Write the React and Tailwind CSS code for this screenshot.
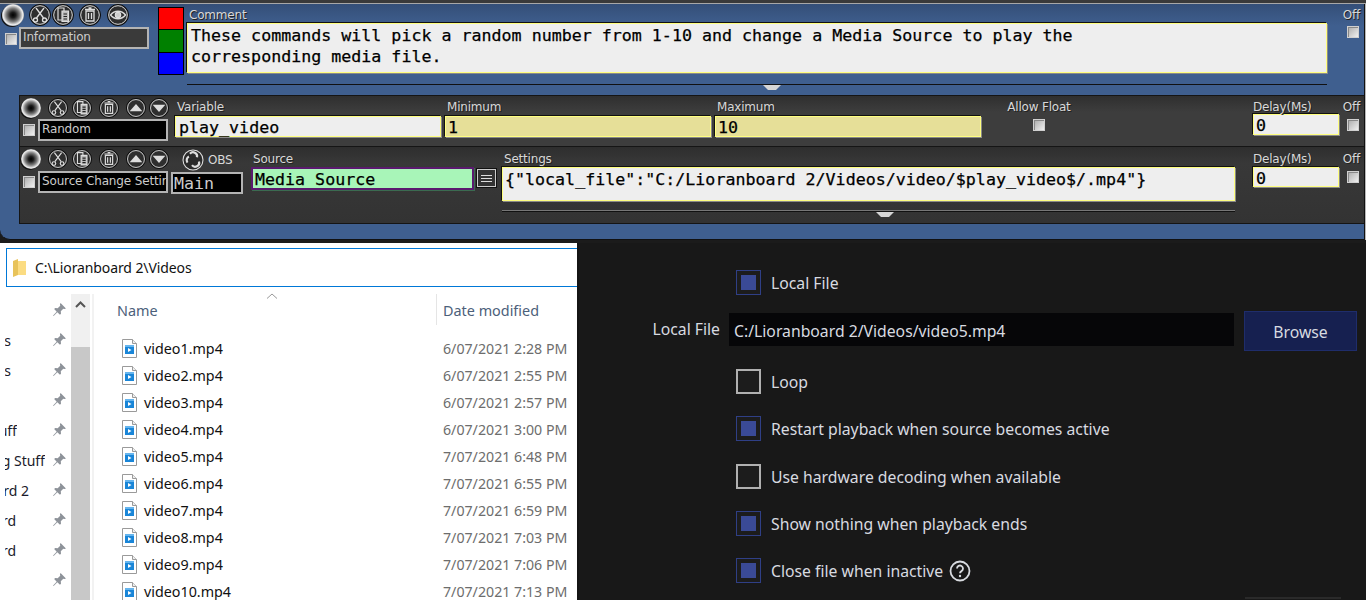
import React from "react";

const Knob = ({ s = 22 }) => (
  <div className={(s === 22 ? "w-[22px] h-[22px]" : "w-[20px] h-[20px]") + " rounded-full shrink-0 bg-[radial-gradient(circle_closest-side,#000_0%,#1c1c1c_25%,#808080_62%,#f0f0f0_90%,#aaa_100%)] shadow-[-1px_1px_0_#111]"} />
);

const Glyphs = {
  cut: (
    <g stroke="#ddd" strokeWidth="1.3" fill="none">
      <path d="M7 4l7.500 10M15 4L7.500 14" />
      <circle cx="6.500" cy="16" r="2" />
      <circle cx="15.500" cy="16" r="2" />
    </g>
  ),
  copy: (
    <g stroke="#ddd" strokeWidth="1.2" fill="#333">
      <path d="M6 4h6v12H6z" />
      <path d="M10 7h6.500v10.500H10z" fill="#bbb" />
      <path d="M11.500 10h3.500M11.500 12.500h3.500M11.500 15h3.500" stroke="#222" />
    </g>
  ),
  trash: (
    <g stroke="#ddd" strokeWidth="1.3" fill="none">
      <path d="M7 7h8v10H7z" />
      <path d="M6 5.500h10M9.500 4h3M9.500 9v6M12.500 9v6" />
    </g>
  ),
  eye: (
    <g stroke="#ddd" strokeWidth="1.4" fill="none">
      <path d="M3.500 11c4-5 11-5 15 0-4 5-11 5-15 0z" />
      <circle cx="11" cy="11" r="2.600" fill="#ccc" />
    </g>
  ),
  up: <path d="M4 14.500L11 6.500l7 8z" fill="#ddd" />,
  down: <path d="M4 7.500h14l-7 8z" fill="#ddd" />,
};

const Btn = ({ g, s = 22, ml = 0 }) => (
  <svg width={s} height={s} viewBox="0 0 22 22" className="shrink-0" style={{ marginLeft: ml }}>
    <circle cx="11" cy="11" r="10.500" fill="#2e2e2e" stroke="#0b0b0b" />
    <circle cx="11" cy="11" r="9.300" fill="none" stroke="#d8d8d8" strokeWidth="1" />
    {Glyphs[g]}
  </svg>
);

const Check = () => (
  <div className="w-[12px] h-[12px] shrink-0 border border-[#d0d0d0] bg-[linear-gradient(135deg,#aaa,#f0f0f0)] shadow-[inset_1px_1px_0_#888]" />
);

const Lbl = ({ children, cls = "" }) => (
  <div className={"font-['DejaVu_Sans',sans-serif] text-[12px] leading-[14px] tracking-[-0.2px] text-[#d8d8d8] whitespace-nowrap [text-shadow:1px_1px_0_#222] " + cls}>{children}</div>
);

const mono = "font-['DejaVu_Sans_Mono',monospace] text-[16.65px] leading-[21px] text-black whitespace-pre [-webkit-text-stroke:0.25px_black]";

const Name = ({ children, cls = "" }) => (
  <div className={"h-[22px] border-2 border-[#b4b4b4] pl-[2px] overflow-hidden whitespace-nowrap font-['DejaVu_Sans',sans-serif] text-[12px] leading-[17px] tracking-[-0.15px] text-[#ccc] " + cls}>{children}</div>
);

const Field = ({ children, cls = "" }) => (
  <div className={"border border-[#ffff80] pl-[2px] shadow-[-1px_-1px_0_#111,1px_1px_0_#8a8a8a] " + mono + " " + cls}>{children}</div>
);

const Tick = () => (
  <svg width="18" height="6" viewBox="0 0 18 6" className="block">
    <path d="M0 0h18l-5 5H5z" fill="#d6d6d6" />
  </svg>
);

const OffCol = ({ cbTop = 3, cls = "ml-[4px]" }) => (
  <div className={"w-[20px] flex flex-col items-center " + cls}>
    <Lbl cls="-ml-[3px]">Off</Lbl>
    <div style={{ marginTop: cbTop }}><Check /></div>
  </div>
);

const Obs = () => (
  <svg width="22" height="22" viewBox="0 0 22 22">
    <circle cx="11" cy="11" r="10" fill="#2a2a2a" stroke="#ddd" strokeWidth="1.100" />
    <g fill="none" stroke="#ddd" strokeWidth="2.200">
      <path d="M8 4.800a4 4 0 0 1 7 3.400" />
      <path d="M17 12.500a4 4 0 0 1-7 3.600" />
      <path d="M5.500 13.600a4 4 0 0 1 1.400-6" />
    </g>
  </svg>
);

function TopPanel() {
  return (
    <div className="h-[236px] w-[1365px] flex flex-col bg-[#3f5f8f] border-r border-b border-[#111] rounded-bl-[10px] overflow-hidden">
      {/* comment section */}
      <div className="h-[91px] flex shrink-0 bg-[linear-gradient(#344f78,#3f5f8f_22px)]">
        <div className="w-[158px] shrink-0 pl-[2px]">
          <div className="flex h-[23px] items-start">
            <Knob />
            <Btn g="cut" ml={5} />
            <Btn g="copy" ml={1} />
            <Btn g="trash" ml={5} />
            <Btn g="eye" ml={6} />
          </div>
          <div className="flex items-center">
            <div className="ml-[3px] mt-[2px]"><Check /></div>
            <Name cls="ml-[2px] w-[130px] bg-[#3a3a3a] text-[#b5b5b5]">Information</Name>
          </div>
        </div>
        <div className="w-[26px] h-[68px] mt-[3px] shrink-0 border border-black flex flex-col gap-[1px] bg-black">
          <div className="flex-1 bg-[#ff0000]" />
          <div className="flex-1 bg-[#008000]" />
          <div className="flex-1 bg-[#0000ff]" />
        </div>
        <div className="w-[1140px] ml-[3px] shrink-0 pt-[4px]">
          <Lbl cls="ml-[2px]">Comment</Lbl>
          <Field cls="h-[50px] mt-[1px] pt-[1px] pl-[3px] bg-[#eeeeee]">{"These commands will pick a random number from 1-10 and change a Media Source to play the\ncorresponding media file."}</Field>
          <div className="h-[1px] bg-[#111] mt-[11px]" />
          <div className="flex justify-center pl-[30px]"><Tick /></div>
        </div>
        <div className="pt-[4px]"><OffCol cbTop={4} cls="ml-[16px]" /></div>
      </div>

      {/* rows */}
      <div className="ml-[19px] flex-1 flex flex-col">
        <div className="h-[52px] shrink-0 flex border border-r-0 border-[#151515] bg-[linear-gradient(#2f2f2f,#3d3d3d_16px)]">
          <div className="w-[155px] shrink-0 pt-[2px] pl-[1px]">
            <div className="flex h-[20px]">
              <Knob s={20} />
              <Btn g="cut" s={20} ml={7} />
              <Btn g="copy" s={20} ml={4} />
              <Btn g="trash" s={20} ml={7} />
              <Btn g="up" s={20} ml={7} />
              <Btn g="down" s={20} ml={3} />
            </div>
            <div className="flex items-center mt-[1px]">
              <div className="ml-[2px]"><Check /></div>
              <Name cls="ml-[3px] w-[130px] bg-black">Random</Name>
            </div>
          </div>
          <div className="w-[266px] shrink-0 pt-[4px]">
            <Lbl cls="ml-[2px]">Variable</Lbl>
            <Field cls="h-[21px] mt-[2px] pl-[3px] bg-[#eeeeee] leading-[19px]">play_video</Field>
          </div>
          <div className="w-[266px] ml-[4px] shrink-0 pt-[4px]">
            <Lbl cls="ml-[2px]">Minimum</Lbl>
            <Field cls="h-[21px] mt-[2px] bg-[#e6df98] leading-[19px]">1</Field>
          </div>
          <div className="w-[266px] ml-[4px] shrink-0 pt-[4px]">
            <Lbl cls="ml-[2px]">Maximum</Lbl>
            <Field cls="h-[21px] mt-[2px] bg-[#e6df98] leading-[19px]">10</Field>
          </div>
          <div className="w-[66px] ml-[25px] shrink-0 pt-[4px] flex flex-col items-center">
            <Lbl>Allow Float</Lbl>
            <div className="mt-[5px]"><Check /></div>
          </div>
          <div className="w-[86px] ml-[181px] shrink-0 pt-[4px]">
            <Lbl>Delay(Ms)</Lbl>
            <Field cls="h-[21px] bg-[#eeeeee] leading-[19px]">0</Field>
          </div>
          <div className="pt-[4px]"><OffCol cbTop={5} /></div>
        </div>

        <div className="h-[77px] shrink-0 flex border border-t-0 border-r-0 border-[#151515] bg-[linear-gradient(#2e2e2e,#383838_16px,#333)]">
          <div className="w-[151px] shrink-0 pt-[2px] pl-[1px]">
            <div className="flex h-[20px]">
              <Knob s={20} />
              <Btn g="cut" s={20} ml={7} />
              <Btn g="copy" s={20} ml={4} />
              <Btn g="trash" s={20} ml={7} />
              <Btn g="up" s={20} ml={7} />
              <Btn g="down" s={20} ml={3} />
            </div>
            <div className="flex items-center mt-[2px]">
              <div className="ml-[2px]"><Check /></div>
              <Name cls="ml-[3px] w-[130px] bg-black">Source Change Settings</Name>
            </div>
          </div>
          <div className="w-[72px] shrink-0">
            <div className="flex items-center h-[24px] ml-[11px] mt-[1px]">
              <Obs />
              <span className="ml-[4px] font-['DejaVu_Sans',sans-serif] text-[12px] tracking-[-0.2px] text-[#d8d8d8]">OBS</span>
            </div>
            <div className="w-[72px] h-[22px] border-2 border-[#b4b4b4] bg-black pl-[1px] text-[#ccc] font-['DejaVu_Sans_Mono',monospace] text-[16.65px] leading-[20px]">Main</div>
          </div>
          <div className="w-[223px] ml-[8px] shrink-0 pt-[5px]">
            <Lbl cls="ml-[2px]">Source</Lbl>
            <div className={"h-[23px] mt-[1px] border-2 border-[#5a1a6e] bg-[#a8f5b8] pl-[2px] shadow-[1px_1px_0_#3b6b50] " + mono + " leading-[19px]"}>Media Source</div>
          </div>
          <div className="w-[19px] h-[18px] ml-[3px] mt-[22px] shrink-0 border border-[#ccc] bg-[#333] flex flex-col justify-center gap-[2px] px-[3px] shadow-[0_0_0_1px_#111]">
            <div className="h-[1px] bg-[#ddd]" />
            <div className="h-[1px] bg-[#ddd]" />
            <div className="h-[1px] bg-[#ddd]" />
          </div>
          <div className="w-[733px] ml-[6px] shrink-0 pt-[5px]">
            <Lbl cls="ml-[2px]">Settings</Lbl>
            <Field cls="h-[34px] mt-[1px] pt-[1px] bg-[#eeeeee]">{'{"local_file":"C:/Lioranboard 2/Videos/video/$play_video$/.mp4"}'}</Field>
            <div className="h-[1px] bg-[#111] mt-[10px] shadow-[0_-1px_0_#777]" />
            <div className="flex justify-center pl-[33px]"><Tick /></div>
          </div>
          <div className="w-[86px] ml-[18px] shrink-0 pt-[5px]">
            <Lbl>Delay(Ms)</Lbl>
            <Field cls="h-[20px] mt-[1px] bg-[#eeeeee] leading-[18px]">0</Field>
          </div>
          <div className="pt-[5px]"><OffCol cbTop={5} /></div>
        </div>
      </div>
    </div>
  );
}

const Pin = () => (
  <svg width="15" height="15" viewBox="0 0 14 14" className="block">
    <path d="M8 1l5 5-1.200.6-1.300-.3-2.300 2.400.2 2.300-1 1L5 9.600 1.500 13 1 12.500l3.400-3.500L2 6.600l1-1 2.300.2 2.400-2.300-.3-1.300z" fill="#8d9299" />
  </svg>
);

const FileIcon = () => (
  <svg width="15" height="19" viewBox="0 0 15 19" className="shrink-0 block">
    <path d="M.5.500h10l4 4v14H.500z" fill="#fff" stroke="#9a9a9a" />
    <path d="M10.500.500v4h4" fill="#eee" stroke="#9a9a9a" />
    <rect x="3" y="6" width="9" height="9" fill="#1a86d8" />
    <rect x="3" y="6" width="9" height="2" fill="#66b5ee" />
    <path d="M6 9l3.500 2L6 13z" fill="#fff" />
  </svg>
);

const files = [
  ["video1.mp4", "6/07/2021 2:28 PM"],
  ["video2.mp4", "6/07/2021 2:55 PM"],
  ["video3.mp4", "6/07/2021 2:57 PM"],
  ["video4.mp4", "6/07/2021 3:00 PM"],
  ["video5.mp4", "7/07/2021 6:48 PM"],
  ["video6.mp4", "7/07/2021 6:55 PM"],
  ["video7.mp4", "7/07/2021 6:59 PM"],
  ["video8.mp4", "7/07/2021 7:03 PM"],
  ["video9.mp4", "7/07/2021 7:06 PM"],
  ["video10.mp4", "7/07/2021 7:13 PM"],
];

const nav = [
  ["", "w-[0px]"],
  ["s", "w-[6px]"],
  ["s", "w-[6px]"],
  ["", "w-[0px]"],
  ["uff", "w-[12px]"],
  ["g Stuff", "w-[40px]"],
  ["rd 2", "w-[24px]"],
  ["rd", "w-[11px]"],
  ["rd", "w-[11px]"],
  ["", "w-[0px]"],
];

function Explorer() {
  return (
    <div className="w-[577px] h-[357px] shrink-0 bg-white overflow-hidden font-['Noto_Sans',sans-serif]">
      <div className="h-[39px] ml-[6px] mt-[5px] w-[580px] border border-[#0078d7] flex items-center pl-[6px]">
        <svg width="13" height="18" viewBox="0 0 13 18" className="shrink-0">
          <path d="M0 2l5-2v16l-5 2z" fill="#e8c35a" />
          <path d="M5 2h8v14H5z" fill="#fbdc82" />
        </svg>
        <span className="ml-[9px] text-[14px] tracking-[-0.1px] text-[#111]">C:\Lioranboard 2\Videos</span>
      </div>
      <div className="flex mt-[7px]">
        <div className="w-[71px] shrink-0">
          {nav.map(([n, w], i) => (
            <div key={i} className="h-[30px] flex items-center pl-[5px] pr-[4px]">
              <div className={"flex justify-end overflow-hidden mt-[2px] " + w}>
                <span className="text-[14px] text-[#1a1a2a] whitespace-nowrap">{n}</span>
              </div>
              <div className="ml-auto"><Pin /></div>
            </div>
          ))}
        </div>
        <div className="w-[19px] shrink-0 flex flex-col">
          <div className="h-[53px] bg-[#f0f0f0] flex justify-center pt-[7px]">
            <svg width="11" height="7" viewBox="0 0 11 7"><path d="M1 6l4.500-4.500L10 6" fill="none" stroke="#555" strokeWidth="2" /></svg>
          </div>
          <div className="flex-1 bg-[#c8c8c8]" />
        </div>
        <div className="w-[2px] ml-[2px] bg-[#f2f2f2] shrink-0" />
        <div className="flex-1 pl-[23px] min-w-0">
          <div className="h-[31px] flex relative">
            <div className="w-[319px] text-[14.4px] text-[#4c607a] pt-[6px]">Name</div>
            <div className="w-[1px] h-[31px] bg-[#e5e5e5]" />
            <div className="pl-[6px] text-[14.4px] text-[#4c607a] pt-[6px]">Date modified</div>
            <svg width="10" height="6" viewBox="0 0 10 6" className="absolute left-[150px] -top-[1px]"><path d="M0 5.500L5 1l5 4.500" fill="none" stroke="#999" /></svg>
          </div>
          <div className="mt-[10px]">
            {files.map(([n, d]) => (
              <div key={n} className="h-[27px] flex items-center">
                <div className="w-[27px] pl-[5px] shrink-0"><FileIcon /></div>
                <div className="w-[299px] text-[14.3px] text-[#111]">{n}</div>
                <div className="text-[14.2px] text-[#6d6d6d] whitespace-nowrap">{d}</div>
              </div>
            ))}
          </div>
        </div>
      </div>
    </div>
  );
}

const ObsCheck = ({ on }) =>
  on ? (
    <div className="w-[25px] h-[25px] shrink-0 border border-[#2f3f86] p-[4px] bg-[#1c1c1c]"><div className="w-full h-full bg-[#3a4a96]" /></div>
  ) : (
    <div className="w-[25px] h-[25px] shrink-0 border-2 border-[#b0b0b0] bg-[#1c1c1c]" />
  );

const ObsRow = ({ on, children, extra, cls = "" }) => (
  <div className={"flex items-center h-[25px] ml-[157px] " + cls}>
    <ObsCheck on={on} />
    <span className="ml-[10px] mt-[2px] text-[15.75px] text-[#d8dbe0] whitespace-nowrap">{children}</span>
    {extra}
  </div>
);

function ObsPanel() {
  return (
    <div className="flex-1 h-[357px] bg-[#181818] font-['Noto_Sans',sans-serif] overflow-hidden border-l-2 border-[#141414]">
      <ObsRow on cls="mt-[27px]">Local File</ObsRow>
      <div className="flex items-center mt-[16px] h-[40px]">
        <div className="w-[141px] text-right text-[15.75px] text-[#d8dbe0] -mt-[3px]">Local File</div>
        <div className="w-[505px] h-[33px] ml-[9px] -mt-[3px] bg-[#060608] pl-[5px] pt-[2px] text-[15.75px] leading-[33px] text-[#d8dbe0]">C:/Lioranboard 2/Videos/video5.mp4</div>
        <div className="w-[113px] h-[40px] ml-[10px] bg-[#162050] border border-[#1f2d6b] text-[15.75px] text-[#d8dbe0] flex items-center justify-center pt-[3px]">Browse</div>
      </div>
      <ObsRow cls="mt-[18px]">Loop</ObsRow>
      <ObsRow on cls="mt-[22px]">Restart playback when source becomes active</ObsRow>
      <ObsRow cls="mt-[23px]">Use hardware decoding when available</ObsRow>
      <ObsRow on cls="mt-[22px]">Show nothing when playback ends</ObsRow>
      <ObsRow
        on
        cls="mt-[22px]"
        extra={
          <svg width="22" height="22" viewBox="0 0 22 22" className="ml-[6px]">
            <circle cx="11" cy="11" r="9.500" fill="none" stroke="#d8dbe0" strokeWidth="1.800" />
            <path d="M8 8.500a3 3 0 1 1 4.500 2.600c-1 .6-1.500 1-1.500 2.200" fill="none" stroke="#d8dbe0" strokeWidth="1.800" />
            <circle cx="11" cy="16" r="1.200" fill="#d8dbe0" />
          </svg>
        }
      >
        Close file when inactive
      </ObsRow>
      <div className="ml-[666px] w-[96px] h-[2px] mt-[14px] bg-[#2a2a2a]" />
    </div>
  );
}

export default function App() {
  return (
    <div className="w-[1366px] h-[600px] overflow-hidden bg-[#1b1b1b] flex flex-col">
      <div className="h-[3px] bg-[#3a3a3a] shrink-0" />
      <div className="h-[1px] bg-[#a8a8a8] shrink-0" />
      <div className="flex shrink-0 h-[236px]">
        <TopPanel />
        <div className="w-[1px] bg-[#b8b8b8]" />
      </div>
      <div className="h-[3px] shrink-0" />
      <div className="flex">
        <Explorer />
        <ObsPanel />
      </div>
    </div>
  );
}
